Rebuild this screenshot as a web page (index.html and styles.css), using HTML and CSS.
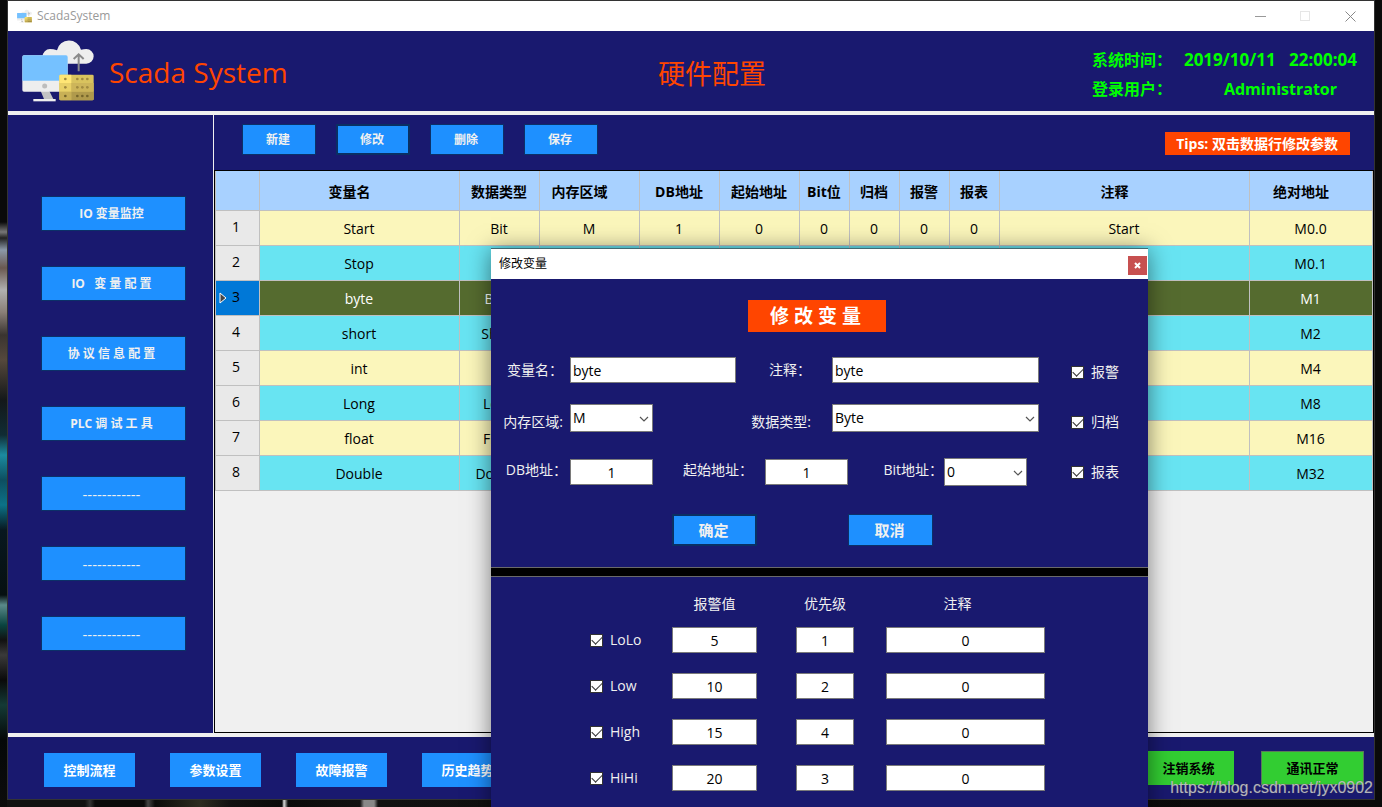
FILE: index.html
```html
<!DOCTYPE html>
<html lang="zh-CN">
<head>
<meta charset="utf-8">
<title>ScadaSystem</title>
<link rel="stylesheet" href="styles.css">
</head>
<body>
<svg class="defs" width="0" height="0" aria-hidden="true">
  <symbol id="logo" viewBox="66 54 216 196">
    <path fill="#eee" d="M150 133a22 22 0 0 1 0-44q10 0 21 4a37 37 0 0 1 72-2q8-2 16-2a22 22 0 0 1 0 44z"/>
    <path fill="#c4c4c4" d="M122 215h26l13 26h-28z"/>
    <rect x="67" y="108" width="136" height="109" rx="5" fill="#eee"/>
    <path fill="#75c1ff" d="M67 184v-71q0-5 5-5h126q5 0 5 5v71z"/>
    <circle cx="134" cy="200" r="7.5" fill="#bdbdbd"/>
    <rect x="100" y="239" width="67" height="7" fill="#eee"/>
    <path fill="none" stroke="#8a8a8a" stroke-width="6" d="M236 156v-50M221 119l15-14 15 14"/>
    <rect x="178" y="166" width="103" height="77" rx="4" fill="#d9c35e"/>
    <path fill="#ffe675" d="M182 166h32v25h-36v-21q0-4 4-4z"/>
    <path fill="#e9d168" d="M178 191h36v26h-36z"/>
    <path fill="#cdb55a" d="M214 191h67v26h-67z"/>
    <path fill="#c8b056" d="M178 217h36v26h-32q-4 0-4-4z"/>
    <path fill="#b09a4c" d="M214 217h67v22q0 4-4 4h-63z"/>
    <g fill="#a08a40">
      <circle cx="196" cy="179" r="4"/><circle cx="232" cy="179" r="4"/><circle cx="247" cy="179" r="4"/><circle cx="262" cy="179" r="4"/>
      <circle cx="196" cy="204" r="4"/><circle cx="232" cy="204" r="4"/><circle cx="247" cy="204" r="4"/><circle cx="262" cy="204" r="4"/>
    </g>
    <g fill="#75652b">
      <circle cx="196" cy="230" r="4"/><circle cx="232" cy="230" r="4"/><circle cx="247" cy="230" r="4"/><circle cx="262" cy="230" r="4"/>
    </g>
  </symbol>
  <symbol id="chevron" viewBox="0 0 10 6"><path d="M1 1l4 4 4-4" fill="none" stroke="#555" stroke-width="1.2"/></symbol>
</svg>

<div class="window">
  <div class="titlebar">
    <svg class="titlebar-icon"><use href="#logo"/></svg>
    <span class="titlebar-text">ScadaSystem</span>
    <div class="window-controls">
      <button type="button" aria-label="最小化"><svg width="11" height="11"><path d="M0 5.500h11" stroke="#999" /></svg></button>
      <button type="button" aria-label="最大化" disabled><svg width="11" height="11"><rect x=".5" y=".5" width="9" height="9" fill="none" stroke="#e6e6e6"/></svg></button>
      <button type="button" aria-label="关闭"><svg width="11" height="11"><path d="M.5.5l10 10M10.500.5l-10 10" stroke="#888" /></svg></button>
    </div>
  </div>

  <header class="header">
    <div class="brand"><svg class="logo"><use href="#logo"/></svg><span>Scada System</span></div>
    <h1 class="page-title">硬件配置</h1>
    <div class="status">
      <span>系统时间：</span><span class="status-value clock">2019/10/11 &nbsp;&nbsp;22:00:04</span>
      <span>登录用户：</span><span class="status-value user">Administrator</span>
    </div>
  </header>

  <div class="body">
    <nav class="sidebar">
      <button type="button" class="btn">IO 变量监控</button>
      <button type="button" class="btn">IO   变 量 配 置</button>
      <button type="button" class="btn">协 议 信 息 配 置</button>
      <button type="button" class="btn">PLC 调 试 工 具</button>
      <button type="button" class="btn spare">------------</button>
      <button type="button" class="btn spare">------------</button>
      <button type="button" class="btn spare">------------</button>
    </nav>
    <main class="main">
      <div class="toolbar">
        <button type="button" class="btn">新建</button>
        <button type="button" class="btn focused">修改</button>
        <button type="button" class="btn">删除</button>
        <button type="button" class="btn">保存</button>
        <span class="tips">Tips: 双击数据行修改参数</span>
      </div>
      <div class="grid-box">
        <table class="grid">
          <colgroup>
            <col class="c-index"><col class="c-name"><col class="c-mid"><col class="c-area"><col class="c-mid"><col class="c-mid">
            <col class="c-flag"><col class="c-flag"><col class="c-flag"><col class="c-flag"><col class="c-note"><col>
          </colgroup>
          <thead>
            <tr><th></th><th class="sortable">变量名</th><th>数据类型</th><th class="sortable">内存区域</th><th>DB地址</th><th>起始地址</th><th>Bit位</th><th>归档</th><th>报警</th><th>报表</th><th class="sortable">注释</th><th class="sortable">绝对地址</th></tr>
          </thead>
          <tbody>
            <tr><th>1</th><td>Start</td><td>Bit</td><td>M</td><td>1</td><td>0</td><td>0</td><td>0</td><td>0</td><td>0</td><td>Start</td><td>M0.0</td></tr>
            <tr><th>2</th><td>Stop</td><td></td><td></td><td></td><td></td><td></td><td></td><td></td><td></td><td></td><td>M0.1</td></tr>
            <tr class="selected"><th><svg class="row-arrow" width="8" height="12"><path d="M1 1v10l6-5z" fill="#444" stroke="#fff"/></svg>3</th><td>byte</td><td>Byte</td><td></td><td></td><td></td><td></td><td></td><td></td><td></td><td></td><td>M1</td></tr>
            <tr><th>4</th><td>short</td><td>Short</td><td></td><td></td><td></td><td></td><td></td><td></td><td></td><td></td><td>M2</td></tr>
            <tr><th>5</th><td>int</td><td></td><td></td><td></td><td></td><td></td><td></td><td></td><td></td><td></td><td>M4</td></tr>
            <tr><th>6</th><td>Long</td><td>Long</td><td></td><td></td><td></td><td></td><td></td><td></td><td></td><td></td><td>M8</td></tr>
            <tr><th>7</th><td>float</td><td>Float</td><td></td><td></td><td></td><td></td><td></td><td></td><td></td><td></td><td>M16</td></tr>
            <tr><th>8</th><td>Double</td><td>Double</td><td></td><td></td><td></td><td></td><td></td><td></td><td></td><td></td><td>M32</td></tr>
          </tbody>
        </table>
      </div>
    </main>
  </div>

  <footer class="footer">
    <button type="button" class="foot-btn">控制流程</button>
    <button type="button" class="foot-btn">参数设置</button>
    <button type="button" class="foot-btn">故障报警</button>
    <button type="button" class="foot-btn">历史趋势</button>
    <div class="footer-right">
      <button type="button" class="foot-btn green">注销系统</button>
      <button type="button" class="foot-btn green comm">通讯正常</button>
    </div>
  </footer>
</div>

<section class="dialog" role="dialog" aria-labelledby="dialog-title">
  <div class="dialog-bar">
    <span id="dialog-title">修改变量</span>
    <button type="button" class="dialog-close" aria-label="关闭"><svg width="7" height="7"><path d="M1 1l5 5M6 1l-5 5" stroke="#fff" stroke-width="2"/></svg></button>
  </div>
  <form class="panel-top">
    <h2 class="banner">修 改 变 量</h2>
    <div class="fields">
      <div class="rows">
        <div class="row">
          <label for="name">变量名：</label><input id="name" class="box" value="byte">
          <label for="note">注释：</label><input id="note" class="box" value="byte">
        </div>
        <div class="row low">
          <label for="area">内存区域:</label>
          <div class="select short"><select id="area" class="box"><option>M</option></select><svg><use href="#chevron"/></svg></div>
          <label for="type">数据类型:</label>
          <div class="select"><select id="type" class="box"><option>Byte</option></select><svg><use href="#chevron"/></svg></div>
        </div>
        <div class="row address">
          <label for="db">DB地址：</label><input id="db" class="box num" value="1">
          <label for="start">起始地址：</label><input id="start" class="box num" value="1">
          <label for="bit">Bit地址：</label>
          <div class="select"><select id="bit" class="box"><option>0</option></select><svg><use href="#chevron"/></svg></div>
        </div>
      </div>
      <div class="checks">
        <label class="check"><input type="checkbox" checked>报警</label>
        <label class="check"><input type="checkbox" checked>归档</label>
        <label class="check"><input type="checkbox" checked>报表</label>
      </div>
    </div>
    <div class="actions">
      <button type="button" class="btn focused">确定</button>
      <button type="button" class="btn">取消</button>
    </div>
  </form>
  <div class="splitter"></div>
  <form class="alarms">
    <span></span><span class="col-title">报警值</span><span class="col-title">优先级</span><span class="col-title note">注释</span>
    <label class="check"><input type="checkbox" checked>LoLo</label><input class="box num" aria-label="LoLo 报警值" value="5"><input class="box num" aria-label="LoLo 优先级" value="1"><input class="box num" aria-label="LoLo 注释" value="0">
    <label class="check"><input type="checkbox" checked>Low</label><input class="box num" aria-label="Low 报警值" value="10"><input class="box num" aria-label="Low 优先级" value="2"><input class="box num" aria-label="Low 注释" value="0">
    <label class="check"><input type="checkbox" checked>High</label><input class="box num" aria-label="High 报警值" value="15"><input class="box num" aria-label="High 优先级" value="4"><input class="box num" aria-label="High 注释" value="0">
    <label class="check"><input type="checkbox" checked>HiHi</label><input class="box num" aria-label="HiHi 报警值" value="20"><input class="box num" aria-label="HiHi 优先级" value="3"><input class="box num" aria-label="HiHi 注释" value="0">
  </form>
</section>
<div class="watermark">https://blog.csdn.net/jyx0902</div>
</body>
</html>
```
FILE: styles.css
```css
* { box-sizing: border-box; }

:root {
  --navy: #19196f;
  --blue: #1e90ff;
  --orange: #ff4500;
  --green: #32cd32;
  --line: #c0c0c0;
}

body {
  position: relative;
  margin: 0;
  height: 100vh;
  overflow: hidden;
  padding: 0 7px 7px;
  display: flex;
  background:
    linear-gradient(#0a0a0a 0 222px, #777 232px, #222 238px, #8b98a8 250px, #6a5850 268px, #b0b0b0 290px, #8a8078 312px, #3a3430 335px, #55483c 360px, #14181a 400px, #102c34 435px, #1b8ba0 455px, #0d4e60 480px, #0c7288 505px, #081820 530px, #061010 595px, #5a8a8a 605px, #0a4440 625px, #111 640px, #3a3a3a 655px, #0a0a0a 680px, #143a36 705px, #050808 740px, #0c0c0c) left / 7px 100% no-repeat,
    linear-gradient(90deg, #111 0 85px, #333 90px, #0a0a0a 95px, #0a0a0a 144px, #444 148px, #0b0b0a 155px, #2c2c20 200px, #111 230px, #0a0a0a 282px, #ddd 284px, #0a0a0a 288px, #111 360px, #888 364px 374px, #111 378px, #0a0a0a) bottom / 100% 7px no-repeat,
    #0a0a0a;
  font-family: "Open Sans", "Noto Sans CJK SC", sans-serif;
  font-size: 14px;
  line-height: 20px;
}

button, input, select { font: inherit; margin: 0; border-radius: 0; }

.defs { position: absolute; }

.window {
  flex: 1;
  min-width: 0;
  display: flex;
  flex-direction: column;
  border: 1px solid #333;
  background: #f0f0f0;
}

.titlebar {
  height: 30px;
  display: flex;
  align-items: center;
  padding-left: 9px;
  background: #fff;
  color: #999;
  font-size: 12px;
}
.titlebar-icon { width: 15px; height: 14px; margin-right: 5px; }
.window-controls { display: flex; margin-left: auto; padding-right: 1px; }
.window-controls button {
  width: 45px;
  height: 28px;
  padding: 0;
  border: 0;
  background: none;
  display: flex;
  align-items: center;
  justify-content: center;
}

.header {
  height: 80px;
  display: grid;
  grid-template-columns: 1fr auto 1fr;
  align-items: center;
  padding: 0 14px;
  background: var(--navy);
}
.brand {
  display: flex;
  align-items: center;
  gap: 15px;
  color: var(--orange);
  font-size: 28px;
  line-height: 40px;
}
.brand span { padding-top: 2px; }
.logo { width: 72px; height: 66px; margin-bottom: 3px; }
.page-title {
  margin: 0;
  padding: 6px 0 0 42px;
  color: var(--orange);
  font-size: 27px;
  line-height: 40px;
  font-weight: 400;
}
.status {
  justify-self: end;
  display: grid;
  grid-template-columns: 92px auto;
  row-gap: 9px;
  padding: 7px 3px 0 0;
  color: #0f0;
  font-size: 16px;
  font-weight: 700;
}
.clock { font-size: 17px; }
.user { padding-left: 20px; text-align: center; }

.body {
  flex: 1;
  min-height: 0;
  display: flex;
  margin: 4px 0;
  gap: 1px;
}
.sidebar {
  width: 205px;
  display: flex;
  flex-direction: column;
  gap: 35px;
  padding: 81px 27px 0 33px;
  background: var(--navy);
}
.btn {
  border: 1px solid #0b3068;
  padding: 0;
  background: var(--blue);
  color: #f0f0f0;
  font-size: 12px;
  font-weight: 700;
  white-space: pre;
}
.btn.focused { border-width: 2px; border-color: #0a2f63; }
.sidebar .btn { height: 35px; padding-right: 4px; }
.sidebar .spare { font-size: 15px; font-weight: 400; }

.main { flex: 1; min-width: 0; display: flex; flex-direction: column; }
.toolbar {
  height: 55px;
  display: flex;
  align-items: flex-start;
  gap: 20px;
  padding: 9px 24px 0 28px;
  background: var(--navy);
}
.toolbar .btn { width: 74px; height: 31px; padding-right: 2px; }
.tips {
  margin: 8px 0 0 auto;
  padding: 0 12px 0 11px;
  background: var(--orange);
  color: #fff;
  font-weight: 700;
  line-height: 23px;
}

.grid-box { flex: 1; min-height: 0; border: 1px solid #000; }
.grid {
  width: 100%;
  table-layout: fixed;
  border-collapse: separate;
  border-spacing: 0;
  text-align: center;
}
.c-index { width: 45px; }
.c-name { width: 200px; }
.c-mid { width: 80px; }
.c-area { width: 100px; }
.c-flag { width: 50px; }
.c-note { width: 250px; }
.grid th, .grid td {
  height: 35px;
  padding: 2px 1px 0 0;
  border: solid var(--line);
  border-width: 0 1px 1px 0;
  background: #fbf6bb;
  white-space: nowrap;
}
.grid th:first-child { border-left-width: 1px; }
.grid thead th { height: 40px; background: #a8d1ff; font-weight: 700; }
.grid thead .sortable { padding-right: 20px; }
.grid tbody tr:nth-child(even) td { background: #68e4f2; }
.grid tbody th {
  position: relative;
  padding: 0 3px 2px 0;
  background: #e9e9e9;
  font-weight: 400;
}
.grid tbody .selected td { background: #556b2f; color: #fff; }
.grid tbody .selected th { background: #0078d7; }
.row-arrow { position: absolute; left: 3px; top: 11px; }

.footer {
  height: 62px;
  display: flex;
  align-items: center;
  gap: 35px;
  padding: 4px 10px 0 36px;
  background: var(--navy);
}
.foot-btn {
  width: 91px;
  height: 34px;
  border: 0;
  padding: 0;
  background: var(--blue);
  color: #fff;
  font-size: 13px;
  font-weight: 700;
}
.footer-right { display: flex; gap: 27px; margin: 0 0 4px auto; }
.green { background: var(--green); color: #000; }
.comm { width: 103px; border: 1px solid #5a7a5a; }

.dialog {
  position: absolute;
  left: 491px;
  top: 248px;
  width: 657px;
  border-top: 1px solid #3f6a72;
  background: var(--navy);
  color: #f0f0f0;
  box-shadow: 0 2px 22px rgba(0, 0, 0, .5);
}
.dialog-bar {
  height: 30px;
  display: flex;
  align-items: center;
  justify-content: space-between;
  padding: 0 1px 0 8px;
  background: #fff;
  color: #000;
  font-size: 12px;
}
.dialog-close {
  width: 19px;
  height: 19px;
  margin-top: 3px;
  border: 0;
  padding: 0;
  background: #c75050;
  line-height: 0;
}
.panel-top {
  height: 288px;
  padding-top: 21px;
  display: flex;
  flex-direction: column;
}
.banner {
  align-self: center;
  width: 138px;
  margin: 0 5px 25px 0;
  padding-right: 3px;
  background: var(--orange);
  color: #fff;
  font-size: 19px;
  line-height: 32px;
  text-align: center;
}
.fields { display: flex; gap: 32px; }
.rows { display: flex; flex-direction: column; }
.row {
  display: grid;
  grid-template-columns: 79px 166px 96px 207px;
  align-items: center;
}
.row label { padding-right: 7px; text-align: right; white-space: nowrap; }
.row label:nth-of-type(2) { padding-right: 21px; }
.row.low { margin: 21px 0 26px; }
.row.low label { align-self: end; }
.row.address { grid-template-columns: 79px 83px 112px 83px 96px 83px; }
.row.address label { padding-right: 3px; align-self: start; line-height: 24px; }
.row.address label:nth-of-type(2) { padding-right: 12px; }
.row.address label:nth-of-type(3) { padding-right: 1px; }

.box {
  display: block;
  width: 100%;
  height: 26px;
  padding: 0 2px;
  border: 1px solid #7a7a7a;
  background: #fff;
  color: #000;
}
.num { text-align: center; }
.select { position: relative; }
.select.short { width: 83px; }
.select .box { height: 28px; appearance: none; }
.select svg {
  position: absolute;
  right: 4px;
  top: 12px;
  width: 10px;
  height: 6px;
  pointer-events: none;
}

.checks { display: flex; flex-direction: column; gap: 30px; padding-top: 5px; }
.check { display: flex; align-items: center; gap: 7px; white-space: nowrap; }
.check input {
  position: relative;
  appearance: none;
  width: 13px;
  height: 13px;
  border: 1px solid #333;
  background: #fff;
}
.check input:checked::after {
  content: "";
  position: absolute;
  left: 1px;
  top: 1px;
  width: 9px;
  height: 5px;
  border: solid #333;
  border-width: 0 0 1px 1px;
  transform: rotate(-45deg);
}

.actions { display: flex; justify-content: center; gap: 91px; margin: 28px 34px 0 0; }
.actions .btn { width: 85px; height: 32px; padding-right: 2px; font-size: 15px; }

.splitter { height: 10px; border: solid #6a6a6a; border-width: 1px 0; background: #000; }

.alarms {
  display: grid;
  grid-template-columns: 82px 124px 90px 159px;
  row-gap: 20px;
  padding: 17px 0 40px 99px;
}
.alarms .box:nth-of-type(3n + 1) { width: 85px; }
.alarms .box:nth-of-type(3n + 2) { width: 58px; }
.col-title { width: 85px; text-align: center; margin-bottom: -7px; }
.col-title:nth-of-type(3) { width: 58px; }
.col-title.note { width: 143px; }

.watermark {
  position: absolute;
  right: 9px;
  bottom: 9px;
  color: rgba(255, 255, 255, .6);
  font-family: "Liberation Sans", sans-serif;
  font-size: 16px;
  text-shadow: 0 0 1px #555;
}
```
